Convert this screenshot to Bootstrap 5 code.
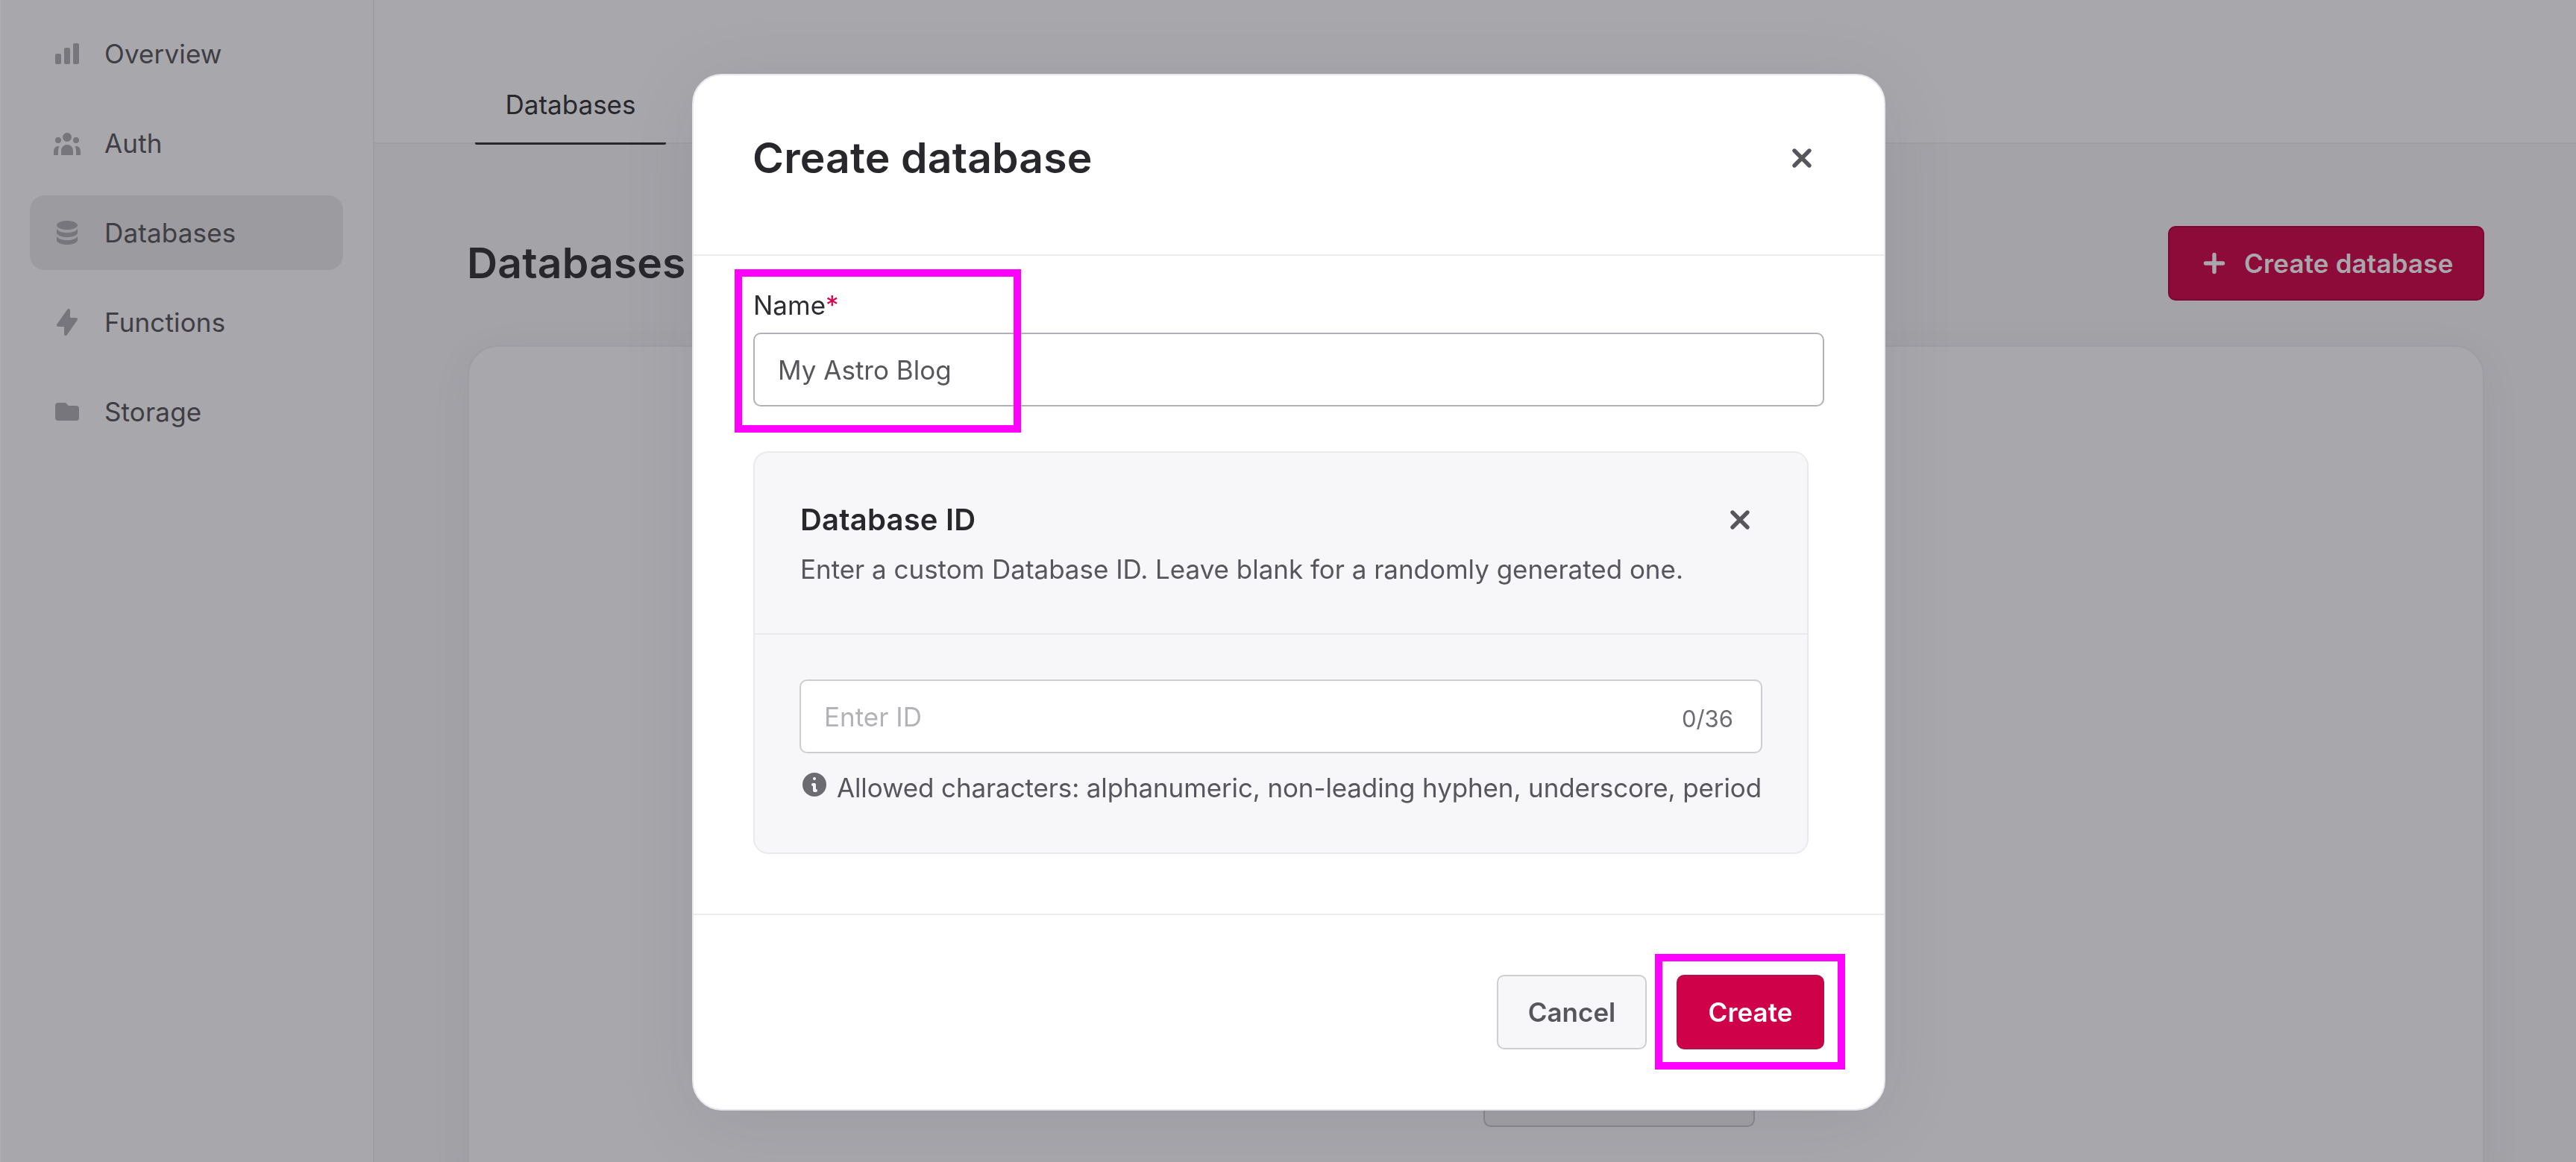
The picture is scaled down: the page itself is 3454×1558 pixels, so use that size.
<!DOCTYPE html>
<html lang="en">
<head>
<meta charset="utf-8">
<meta name="viewport" content="width=device-width, initial-scale=1">
<title>Databases</title>
<link rel="stylesheet" href="https://cdn.jsdelivr.net/npm/bootstrap@5.3.0/dist/css/bootstrap.min.css">
<style>
  html, body { height: 100%; }
  body { font-family: Inter, "Liberation Sans", sans-serif; font-size: 35px; line-height: 48px; color: #3d3c42; background: #a4a3a8; overflow: hidden; }
  svg { display: block; flex: none; fill: currentColor; }
  .icon { width: 40px; height: 40px; }
  .line-icon { fill: none; stroke: currentColor; stroke-width: 5.4; stroke-linecap: round; }
  .display-text { font-size: 57px; font-weight: 600; line-height: 64px; letter-spacing: .15px; color: #28272c; white-space: nowrap; }

  /* console behind the dialog */
  .sidebar { width: 502px; padding: 22px 40px 0 39px; background: #a8a7ac; border-left: 1px solid #b0afb4; border-right: 2px solid #9e9da2; }
  .sidebar .nav { gap: 20px; }
  .sidebar .nav-link { height: 100px; padding: 0 30px; gap: 30px; border-radius: 20px; color: #3f3e44; letter-spacing: .15px; }
  .sidebar .nav-link svg { color: #77767c; }
  .sidebar .nav-link.active { background: #9c9ba0; }
  .topbar { height: 193px; background: #a8a7ac; border-bottom: 2px solid #9e9da2; padding-left: 135px; }
  .topbar .tab-link { width: 256px; height: 104px; margin-bottom: -3px; border-bottom: 3px solid #28272c; border-radius: 2px; color: #28272c; line-height: 101px; text-align: center; }
  .content { padding: 110px 123px 0 125px; }
  .content .display-text { margin-left: -1px; }
  .btn-main { width: 424px; height: 100px; padding: 0 0 0 40px; gap: 20px; font-size: 35px; font-weight: 600; border: 2px solid #7d0732; border-radius: 10px; background: #8d0b38; color: #a8a7ac; letter-spacing: .15px; }
  .empty-panel { margin-top: 60px; border: 2px solid #9e9da2; border-radius: 40px; background: #a8a7ac; box-shadow: 0 12px 60px rgba(60,60,80,.05); }
  .docs-btn { width: 364px; height: 100px; margin: 946px 0 90px 1360px; border: 2px solid #88878c; border-radius: 10px; background: #a1a0a5; }

  /* dialog */
  .modal { padding: 99px 0 0 928px; }
  .modal-box { position: relative; width: 1600px; height: 1390px; border: 2px solid #e8e9f0; border-radius: 40px; background: #fff; box-shadow: 0 16px 100px rgba(55,59,77,.10); color: #2d2c32; }
  .modal-head { height: 242px; padding: 0 90px 19px 79px; border-bottom: 2px solid #ebebf0; }
  .modal-head svg, .panel-head svg { color: #56565c; }
  .modal-main { flex: 1; padding: 42px 80px 0; }
  .modal-main .form-control { height: 99px; padding: 0 31px; border: 2px solid #b1b2b8; border-radius: 10px; font-size: 35px; color: #56565c; }
  .modal-main .form-control::placeholder { color: #b3b2b8; opacity: 1; }
  .field-label { height: 61px; color: #2d2c32; }
  .required-mark { color: #d6004c; }
  .id-panel { width: 1415px; height: 540px; margin-top: 60px; border: 2px solid #e9eaee; border-radius: 20px; background: #f7f7fa; color: #56565c; }
  .panel-head { height: 244px; padding: 66px 70px 0 61px; border-bottom: 2px solid #e9eaee; }
  .panel-head svg { margin-top: 4px; }
  .panel-title { font-size: 40px; font-weight: 600; line-height: 48px; letter-spacing: .2px; color: #28272c; }
  .panel-desc { margin-top: 18px; letter-spacing: -.03px; }
  .panel-main { padding: 60px 60px 0; }
  .panel-main .form-control { border-color: #cdced2; padding-right: 150px; }
  .counter { position: absolute; right: 39px; top: 29px; font-size: 31px; line-height: 48px; color: #6c6c73; }
  .hint { margin-top: 22px; gap: 10px; white-space: nowrap; letter-spacing: -.13px; }
  .hint svg { color: #6c6b72; }
  .modal-foot { height: 262px; padding: 0 80px; gap: 40px; border-top: 2px solid #ebebf0; }
  .modal-foot .btn { height: 100px; padding: 0; font-size: 35px; font-weight: 600; border-width: 2px; border-radius: 10px; }
  .btn-cancel { width: 201px; background: #f7f7fa; border-color: #cdced2; color: #56565c; }
  .btn-create { width: 198px; background: #cf0148; border-color: #b2104a; color: #fff; }
  .highlight { position: absolute; border: 10px solid #f0f; pointer-events: none; }
  .highlight-name { left: 55px; top: 260px; width: 384px; height: 219px; }
  .highlight-create { left: 1289px; top: 1178px; width: 255px; height: 155px; }
</style>
</head>
<body>
<div class="d-flex h-100">
  <aside class="sidebar flex-shrink-0">
    <nav class="nav flex-column">
      <a class="nav-link d-flex align-items-center" href="#"><svg class="icon" viewBox="0 0 20 20"><path d="M2 11a1 1 0 011-1h2a1 1 0 011 1v5a1 1 0 01-1 1H3a1 1 0 01-1-1v-5zM8 7a1 1 0 011-1h2a1 1 0 011 1v9a1 1 0 01-1 1H9a1 1 0 01-1-1V7zM14 4a1 1 0 011-1h2a1 1 0 011 1v12a1 1 0 01-1 1h-2a1 1 0 01-1-1V4z"/></svg><span>Overview</span></a>
      <a class="nav-link d-flex align-items-center" href="#"><svg class="icon" viewBox="0 0 20 20"><path d="M13 6a3 3 0 11-6 0 3 3 0 016 0zM18 8a2 2 0 11-4 0 2 2 0 014 0zM14 15a4 4 0 00-8 0v3h8v-3zM6 8a2 2 0 11-4 0 2 2 0 014 0zM16 18v-3a5.972 5.972 0 00-.75-2.906A3.005 3.005 0 0119 15v3h-3zM4.75 12.094A5.973 5.973 0 004 15v3H1v-3a3 3 0 013.75-2.906z"/></svg><span>Auth</span></a>
      <a class="nav-link active d-flex align-items-center" href="#"><svg class="icon" viewBox="0 0 20 20"><path d="M3 12v3c0 1.657 3.134 3 7 3s7-1.343 7-3v-3c0 1.657-3.134 3-7 3s-7-1.343-7-3z"/><path d="M3 7v3c0 1.657 3.134 3 7 3s7-1.343 7-3V7c0 1.657-3.134 3-7 3S3 8.657 3 7z"/><path d="M17 5c0 1.657-3.134 3-7 3S3 6.657 3 5s3.134-3 7-3 7 1.343 7 3z"/></svg><span>Databases</span></a>
      <a class="nav-link d-flex align-items-center" href="#"><svg class="icon" viewBox="0 0 20 20"><path d="M11.3 1.046A1 1 0 0112 2v5h4a1 1 0 01.82 1.573l-7 10A1 1 0 018 18v-5H4a1 1 0 01-.82-1.573l7-10a1 1 0 011.12-.38z"/></svg><span>Functions</span></a>
      <a class="nav-link d-flex align-items-center" href="#"><svg class="icon" viewBox="0 0 20 20"><path d="M2 6a2 2 0 012-2h5l2 2h5a2 2 0 012 2v6a2 2 0 01-2 2H4a2 2 0 01-2-2V6z"/></svg><span>Storage</span></a>
    </nav>
  </aside>
  <div class="flex-grow-1 d-flex flex-column">
    <header class="topbar d-flex align-items-end flex-shrink-0">
      <a class="tab-link text-decoration-none" href="#">Databases</a>
    </header>
    <main class="content d-flex flex-column flex-grow-1">
      <div class="d-flex justify-content-between align-items-center">
        <h1 class="display-text mb-0">Databases</h1>
        <button class="btn btn-main d-flex align-items-center" type="button"><svg class="icon line-icon" viewBox="0 0 40 40"><path d="M20 8.5v23M8.5 20h23"/></svg><span>Create database</span></button>
      </div>
      <section class="empty-panel flex-shrink-0">
        <div class="docs-btn"></div>
      </section>
    </main>
  </div>
</div>

<div class="modal d-block" tabindex="-1" role="dialog">
  <div class="modal-box d-flex flex-column">
    <div class="modal-head d-flex align-items-center justify-content-between">
      <h2 class="display-text mb-0">Create database</h2>
      <svg class="icon line-icon" viewBox="0 0 40 40"><path d="M10 10l20 20M30 10L10 30"/></svg>
    </div>
    <div class="modal-main">
      <label class="field-label d-block" for="name">Name<span class="required-mark">*</span></label>
      <input class="form-control" id="name" type="text" value="My Astro Blog">
      <div class="id-panel">
        <div class="panel-head d-flex justify-content-between align-items-start">
          <div>
            <div class="panel-title">Database ID</div>
            <div class="panel-desc text-nowrap">Enter a custom Database ID. Leave blank for a randomly generated one.</div>
          </div>
          <svg class="icon line-icon" viewBox="0 0 40 40"><path d="M10 10l20 20M30 10L10 30"/></svg>
        </div>
        <div class="panel-main">
          <div class="position-relative">
            <input class="form-control" type="text" placeholder="Enter ID">
            <span class="counter">0/36</span>
          </div>
          <div class="hint d-flex"><svg class="icon" viewBox="0 0 20 20"><path fill-rule="evenodd" d="M18 10a8 8 0 11-16 0 8 8 0 0116 0zm-7-4a1 1 0 11-2 0 1 1 0 012 0zM9 9a1 1 0 000 2v3a1 1 0 001 1h1a1 1 0 100-2v-3a1 1 0 00-1-1H9z"/></svg><span>Allowed characters: alphanumeric, non-leading hyphen, underscore, period</span></div>
        </div>
      </div>
    </div>
    <div class="modal-foot d-flex align-items-center justify-content-end">
      <button class="btn btn-cancel" type="button">Cancel</button>
      <button class="btn btn-create" type="button">Create</button>
    </div>
    <div class="highlight highlight-name"></div>
    <div class="highlight highlight-create"></div>
  </div>
</div>
<script src="https://cdn.jsdelivr.net/npm/bootstrap@5.3.0/dist/js/bootstrap.bundle.min.js"></script>
</body>
</html>
